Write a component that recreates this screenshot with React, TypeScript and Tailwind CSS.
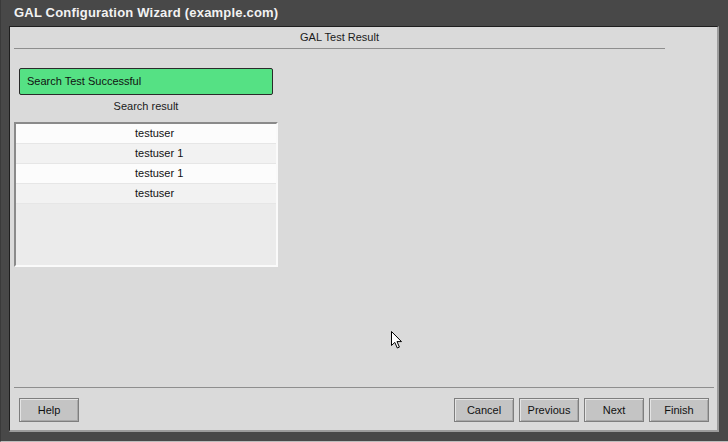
import React from "react";

const font = { fontFamily: '"Liberation Sans", Arial, sans-serif' };

function Btn({ label }: { label: string }) {
  return (
    <div className="w-[60px] h-[24px] flex items-center justify-center text-[11px] text-[#111] bg-[#c4c4c4] border border-[#7e7e7e] shadow-[inset_1px_1px_0_#e4e4e4,inset_-1px_-1px_0_#a8a8a8]">
      {label}
    </div>
  );
}

export default function App() {
  const rows = ["testuser", "testuser 1", "testuser 1", "testuser"];
  return (
    <div style={font} className="relative w-[728px] h-[442px] bg-[#484848] flex flex-col border-l border-[#3a3a3a] border-b border-b-[#bdbdbd]">
      <div className="h-[26px] pl-[13px] flex items-center text-[13px] font-bold text-[#f2f2f2] tracking-[0.2px]">
        GAL Configuration Wizard (example.com)
      </div>
      <div className="ml-[8px] w-[710px] h-[406px] bg-[#dadada] border-l border-t border-[#1e1e1e] border-r-2 border-b-2 border-r-[#9c9c9c] border-b-[#9c9c9c] flex flex-col">
        <div className="ml-[4px] w-[651px] pt-[3px] pb-[4px] border-b border-[#8e8e8e] text-center text-[11px] leading-[14px] text-[#1a1a1a]">
          GAL Test Result
        </div>
        <div className="ml-[9px] w-[254px] mt-[19px]">
          <div className="h-[27px] rounded-[2px] border border-[#2a2a2a] bg-[#55e184] flex items-center pl-[7px] text-[11px] text-[#111]">
            Search Test Successful
          </div>
          <div className="mt-[4px] text-center text-[11px] leading-[14px] text-[#1a1a1a]">Search result</div>
        </div>
        <div className="ml-[4px] mt-[9px] w-[264px] h-[145px] border-l-2 border-t-2 border-[#8a8a8a] border-r-2 border-b-2 border-r-[#fafafa] border-b-[#fafafa] bg-[#ebebeb] flex flex-col">
          {rows.map((r, i) => (
            <div
              key={i}
              className={`h-[20px] flex items-center pl-[119px] text-[11px] text-[#111] border-b border-[#e6e6e6] ${i % 2 === 0 ? "bg-[#fcfcfc]" : "bg-[#f2f2f2]"}`}
            >
              {r}
            </div>
          ))}
        </div>
        <div className="flex-1" />
        <div className="ml-[4px] w-[700px] border-t border-[#8e8e8e]" />
        <div className="mt-[10px] mb-[8px] ml-[9px] mr-[8px] flex items-center">
          <Btn label="Help" />
          <div className="flex-1" />
          <div className="flex gap-[5px]">
            <Btn label="Cancel" />
            <Btn label="Previous" />
            <Btn label="Next" />
            <Btn label="Finish" />
          </div>
        </div>
      </div>
      <svg className="absolute left-[389px] top-[330px]" width="14" height="20" viewBox="0 0 14 20">
        <path d="M1.5 1.5 L1.5 15.5 L4.8 12.4 L7.3 18 L9.4 17.1 L7 11.6 L11.5 11.6 Z" fill="#fff" stroke="#000" strokeWidth="1" strokeLinejoin="miter" />
      </svg>
    </div>
  );
}
